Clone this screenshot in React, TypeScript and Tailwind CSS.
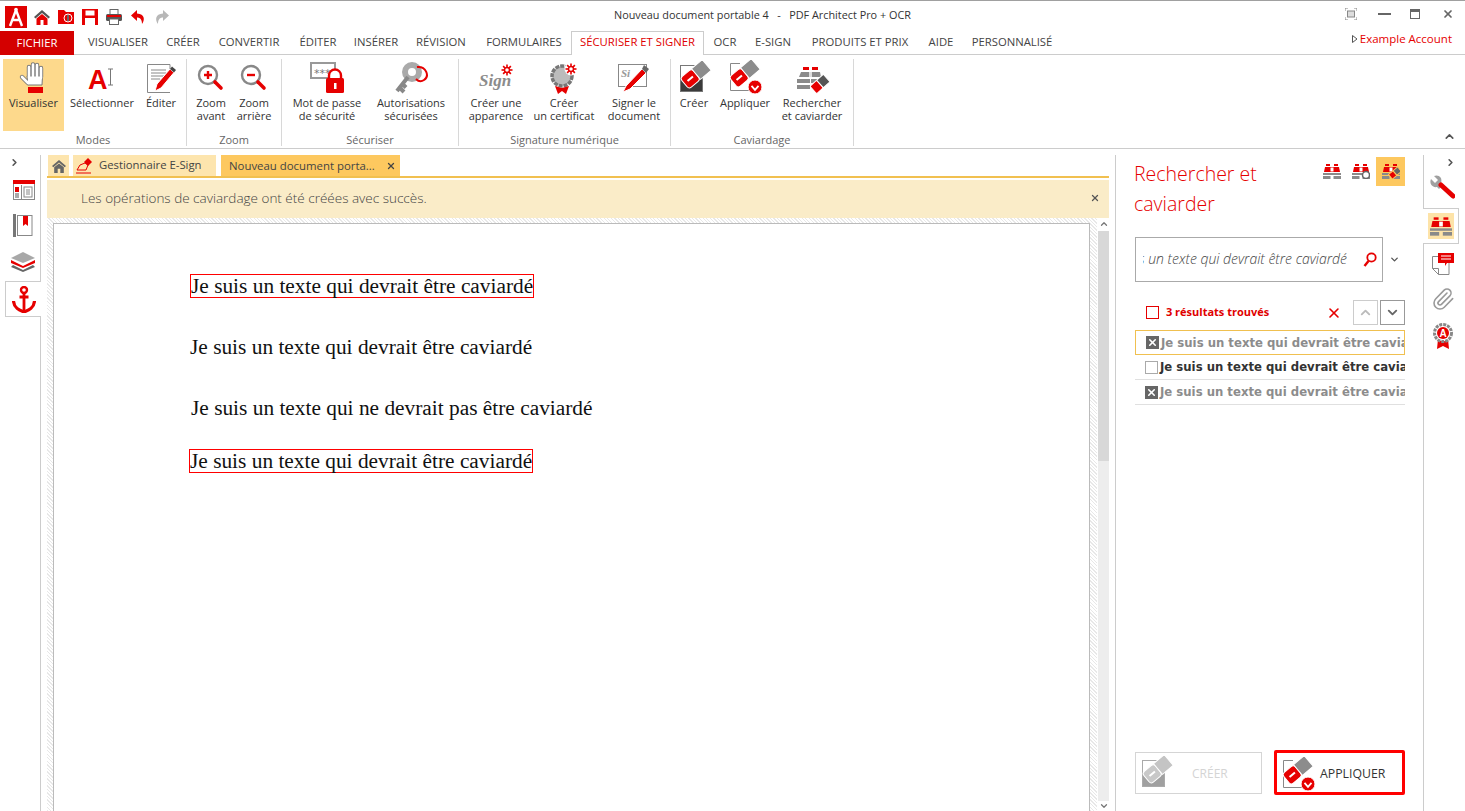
import React from "react";
import { X, ChevronUp, ChevronDown, ChevronRight, Paperclip } from "lucide-react";

const RED = "#e60000";

function Eraser({ cx = 19, cy = 14, red = RED, gray = "#8c8c8c" }: { cx?: number; cy?: number; red?: string; gray?: string }) {
  return (
    <g transform={`rotate(-40 ${cx} ${cy})`}>
      <rect x={cx - 15} y={cy - 7} width="15" height="14" rx="3" fill={red} stroke="#fff" />
      <rect x={cx} y={cy - 7} width="14" height="14" fill={gray} stroke="#fff" />
      <rect x={cx - 11} y={cy - 1} width="7" height="2" fill="#fff" />
    </g>
  );
}
function Check({ x, y, r = 6 }: { x: number; y: number; r?: number }) {
  return (
    <g>
      <circle cx={x} cy={y} r={r} fill={RED} stroke="#fff" />
      <path d={`M${x - r * 0.5} ${y - r * 0.15}L${x} ${y + r * 0.4}L${x + r * 0.5} ${y - r * 0.15}`} fill="none" stroke="#fff" strokeWidth="1.8" />
    </g>
  );
}
function EraserCreate({ muted = false }: { muted?: boolean }) {
  return (
    <svg width="34" height="34" viewBox="0 0 34 34">
      <rect x="3.500" y="4.500" width="22" height="26" fill={muted ? "#a0a0a0" : "#3a3a3a"} stroke={muted ? "#aaa" : "#777"} />
      <rect x="4" y="5" width="21" height="12" fill="#fff" />
      <Eraser cx={19} cy={13} red={muted ? "#c8c8c8" : RED} gray={muted ? "#c4c4c4" : "#8c8c8c"} />
    </svg>
  );
}
function EraserApply() {
  return (
    <svg width="36" height="36" viewBox="0 0 36 36">
      <path d="M24.500 24V30.500H3.500V3.500H13" fill="none" stroke="#888" />
      <Eraser cx={18} cy={13} />
      <Check x={28} y={27} r={7} />
    </svg>
  );
}
function Bino({ w = 18, h = 15, eraser = false, cycle = false }: { w?: number; h?: number; eraser?: boolean; cycle?: boolean }) {
  return (
    <svg width={w} height={h} viewBox="0 0 18 15">
      <rect x="3" y="0" width="4" height="2" fill={RED} />
      <rect x="11" y="0" width="4" height="2" fill={RED} />
      <path d="M2 3H16L17 8H1Z" fill={RED} />
      <rect x="7.500" y="3.500" width="3" height="4" fill="#fff" />
      <rect x="0" y="9" width="18" height="2" fill="#8a8a8a" />
      <rect x="0" y="12" width="7.500" height="3" fill="#8a8a8a" />
      <rect x="10.500" y="12" width="7.500" height="3" fill="#8a8a8a" />
      {eraser && (
        <g transform="rotate(-40 13 9)">
          <rect x="7" y="6" width="6" height="6" fill={RED} stroke="#fdc85f" />
          <rect x="13" y="6" width="6" height="6" fill="#666" stroke="#fdc85f" />
        </g>
      )}
      {cycle && <circle cx="14" cy="11" r="3.500" fill="#fff" stroke="#666" strokeWidth="1.500" />}
    </svg>
  );
}
function Star({ x, y, r = 5 }: { x: number; y: number; r?: number }) {
  return (
    <g stroke={RED} strokeWidth="1.600">
      {[0, 45, 90, 135].map((a) => (
        <line key={a} x1={x - r} y1={y} x2={x + r} y2={y} transform={`rotate(${a} ${x} ${y})`} />
      ))}
      <circle cx={x} cy={y} r={r * 0.45} fill="#fff" strokeWidth="1.400" />
    </g>
  );
}

const Ic = {
  hand: (
    <svg width="34" height="34" viewBox="0 0 34 34">
      <g strokeLinecap="round" fill="none">
        <g stroke="#777" strokeWidth="4.400">
          <path d="M12 16V6M16 15V3.500M20 15V4M24 16V7M11 22L5 16" />
        </g>
        <path d="M10.500 15H25.500L25 24H11Z" fill="#fff" stroke="#777" />
        <g stroke="#fff" strokeWidth="2.600">
          <path d="M12 17V6M16 17V3.500M20 17V4M24 17V7M11 22L5 16" />
        </g>
      </g>
      <rect x="11" y="26" width="15" height="6" fill={RED} />
    </svg>
  ),
  select: (
    <svg width="34" height="34" viewBox="0 0 34 34">
      <text x="3" y="28" fontFamily="Liberation Sans" fontWeight="700" fontSize="27" fill={RED}>A</text>
      <path d="M23 8H28M25.500 8V24M23 24H28" stroke="#777" fill="none" />
    </svg>
  ),
  edit: (
    <svg width="34" height="34" viewBox="0 0 34 34">
      <path d="M3.500 3.500H26V16M3.500 3.500V31.500H26" fill="#fff" stroke="#888" />
      <path d="M7 9H22M7 12H22M7 15H20M7 18H16" stroke="#888" />
      <path d="M11 30L13 23L26 8L30 11.500L17 27Z" fill={RED} stroke="#fff" />
      <path d="M26 8L28 5.500L32 9L30 11.500Z" fill="#444" />
    </svg>
  ),
  zoomIn: (
    <svg width="34" height="34" viewBox="0 0 34 34">
      <circle cx="14" cy="14" r="9" fill="#fff" stroke="#888" strokeWidth="2.400" />
      <path d="M10 14H18M14 10V18" stroke={RED} strokeWidth="2.400" />
      <path d="M21 21L27 27" stroke={RED} strokeWidth="3.600" strokeLinecap="round" />
    </svg>
  ),
  zoomOut: (
    <svg width="34" height="34" viewBox="0 0 34 34">
      <circle cx="14" cy="14" r="9" fill="#fff" stroke="#888" strokeWidth="2.400" />
      <path d="M10 14H18" stroke={RED} strokeWidth="2.400" />
      <path d="M21 21L27 27" stroke={RED} strokeWidth="3.600" strokeLinecap="round" />
    </svg>
  ),
  pwd: (
    <svg width="36" height="34" viewBox="0 0 36 34">
      <rect x="2" y="2" width="24" height="15" fill="#fff" stroke="#999" strokeWidth="2" />
      <text x="5" y="16" fontFamily="DejaVu Sans" fontSize="11" fill="#777">***</text>
      <path d="M20 18V14.500a6 6 0 0 1 12 0V18" fill="#fff" stroke={RED} strokeWidth="2.400" />
      <rect x="17" y="17" width="18" height="15" rx="1.500" fill={RED} />
      <rect x="25" y="22" width="2.500" height="6" fill="#fff" />
    </svg>
  ),
  key: (
    <svg width="36" height="34" viewBox="0 0 36 34">
      <circle cx="19" cy="11" r="7" fill="none" stroke="#aaa" strokeWidth="6" />
      <path d="M15 16L4 30M7 27L11 31M9.500 23L13 26.500" stroke="#888" strokeWidth="4" fill="none" />
      <path d="M24 6C33 5 37 15 31 19C28 21 25 20 23 18" stroke={RED} strokeWidth="2" fill="none" />
    </svg>
  ),
  sign: (
    <svg width="42" height="34" viewBox="0 0 42 34">
      <text x="4" y="25" fontFamily="Liberation Serif" fontStyle="italic" fontWeight="700" fontSize="17" fill="#8c8c8c">Sign</text>
      <Star x={32} y={9} r={5.500} />
    </svg>
  ),
  cert: (
    <svg width="34" height="34" viewBox="0 0 34 34">
      <circle cx="15" cy="15" r="10" fill="#bbb" stroke="#777" strokeWidth="3.500" strokeDasharray="4 1" />
      <path d="M8 25L11 33L15 30L19 33L22 25L15 27Z" fill={RED} />
      <circle cx="24" cy="8" r="6.500" fill="#fff" />
      <Star x={24} y={8} r={5.500} />
    </svg>
  ),
  signer: (
    <svg width="34" height="34" viewBox="0 0 34 34">
      <rect x="1.500" y="3.500" width="28" height="22" fill="#fff" stroke="#888" />
      <text x="4" y="16" fontFamily="Liberation Serif" fontStyle="italic" fontWeight="700" fontSize="11" fill="#999">Si</text>
      <path d="M6 31L9 25L25 8L29 12L13 28Z" fill={RED} stroke="#fff" />
      <path d="M25 8L27 4L32 8L29 12Z" fill="#666" />
    </svg>
  ),
  findErase: (
    <svg width="36" height="34" viewBox="0 0 36 34">
      <rect x="9" y="6" width="6" height="3" fill={RED} />
      <rect x="18" y="6" width="6" height="3" fill={RED} />
      <path d="M7 11H15V16H5ZM18 11H26L27 16H18Z" fill="#8a8a8a" />
      <rect x="15" y="11" width="3" height="5" fill="#ddd" />
      <rect x="3" y="18" width="13" height="4" fill="#8a8a8a" />
      <rect x="17" y="18" width="11" height="4" fill="#8a8a8a" />
      <rect x="3" y="24" width="13" height="4" fill="#8a8a8a" />
      <g transform="rotate(-42 26 23)">
        <rect x="17" y="18" width="9" height="10" rx="1" fill={RED} stroke="#fff" />
        <rect x="26" y="18" width="9" height="10" fill="#555" stroke="#fff" />
      </g>
    </svg>
  ),
};

function Btn({ w, icon, active, children }: { w: string; icon: React.ReactNode; active?: boolean; children: React.ReactNode }) {
  return (
    <div className={`${w} h-[72px] flex flex-col items-center shrink-0 ${active ? "bg-[#fdd98c]" : ""}`}>
      <div className="mt-[2px] h-[34px] flex items-center justify-center">{icon}</div>
      <div className="mt-[1px] text-[11px] leading-[13px] text-center text-[#333] whitespace-nowrap">{children}</div>
    </div>
  );
}
function Group({ w, pl, label, children }: { w: string; pl: string; label: string; children: React.ReactNode }) {
  return (
    <div className={`${w} h-[87px] shrink-0 flex flex-col border-r border-[#d8d8d8]`}>
      <div className={`flex h-[72px] ${pl}`}>{children}</div>
      <div className="h-[15px] mt-[1px] text-[11px] leading-[15px] text-center text-[#666]">{label}</div>
    </div>
  );
}
function Tab({ w, active, children }: { w: string; active?: boolean; children: React.ReactNode }) {
  return (
    <div
      className={`${w} shrink-0 h-[24px] pb-[2px] flex items-center justify-center text-[11.300px] whitespace-nowrap ${
        active ? "bg-white border border-b-0 border-[#ccc] text-[#e00000]" : "text-[#444]"
      }`}
    >
      {children}
    </div>
  );
}
function Row({ checked, active }: { checked: boolean; active?: boolean }) {
  return (
    <div
      className={`h-[25px] w-[270px] flex items-center pl-[10px] overflow-hidden whitespace-nowrap border-b ${
        active ? "border border-[#f0c050]" : "border-[#e0e0e0]"
      }`}
    >
      {checked ? (
        <span className="w-[13px] h-[13px] bg-[#666] flex items-center justify-center shrink-0">
          <X size={11} color="#fff" strokeWidth={3.500} />
        </span>
      ) : (
        <span className="w-[13px] h-[13px] border border-[#aaa] shrink-0" />
      )}
      <span
        className={`ml-[2px] mt-[2px] text-[11.700px] font-bold font-['DejaVu_Sans',sans-serif] ${
          checked ? "text-[#8c8c8c]" : "text-[#333]"
        }`}
      >
        Je suis un texte qui devrait être caviardé
      </span>
    </div>
  );
}

export default function App() {
  const serif = "font-['Liberation_Serif',serif] text-[21.360px] leading-[22px] text-[#111] whitespace-nowrap";
  return (
    <div className="w-[1465px] h-[811px] overflow-hidden flex flex-col bg-white font-['Open_Sans',sans-serif]">
      {/* title bar */}
      <div className="h-[31px] shrink-0 border-t border-[#a0a0a0] flex items-center pl-[5px]">
        <div className="w-[22px] h-[22px] bg-[#e00000] flex items-center justify-center mt-[2px]">
          <svg width="18" height="20" viewBox="0 0 18 20">
            <path d="M9 3L3 19M9 3L15 19M5.500 13H12.500" stroke="#fff" strokeWidth="2.400" fill="none" />
            <circle cx="9" cy="2.500" r="1.800" fill="#fff" />
          </svg>
        </div>
        <div className="flex items-center gap-[8px] ml-[7px] mt-[1px]">
          <svg width="16" height="16" viewBox="0 0 16 16">
            <path d="M0 8L8 1L16 8L14.500 9.500L8 4L1.500 9.500Z" fill="#555" />
            <path d="M2.500 9.500L8 5L13.500 9.500V16H9.500V11H6.500V16H2.500Z" fill={RED} />
          </svg>
          <svg width="16" height="16" viewBox="0 0 16 16">
            <path d="M0 1H6L8 3H16V15H0Z" fill={RED} />
            <circle cx="10" cy="9" r="4" fill="none" stroke="#fff" />
            <path d="M10 6V12" stroke="#666" strokeWidth="2" />
          </svg>
          <svg width="16" height="16" viewBox="0 0 16 16">
            <path d="M0 0H16V16H0Z" fill={RED} />
            <rect x="3.500" y="1.500" width="9" height="5" fill="#fff" />
            <rect x="3" y="9" width="10" height="7" fill="#fff" />
          </svg>
          <svg width="16" height="16" viewBox="0 0 16 16">
            <rect x="4" y="0.500" width="8" height="5" fill="#fff" stroke="#666" />
            <rect x="0" y="5" width="16" height="7" rx="1.500" fill="#555" />
            <rect x="1" y="6" width="14" height="2" fill={RED} />
            <rect x="3.500" y="10" width="9" height="5.500" fill="#fff" stroke="#666" />
          </svg>
          <svg width="16" height="16" viewBox="0 0 16 16">
            <path d="M7 1L1 6.500L7 12V8.500C10 8.500 12 10.500 12 15C15 11 15 5 7 4.500Z" fill={RED} />
          </svg>
          <svg width="16" height="16" viewBox="0 0 16 16">
            <path d="M9 1L15 6.500L9 12V8.500C6 8.500 4 10.500 4 15C1 11 1 5 9 4.500Z" fill="#b8b8b8" />
          </svg>
        </div>
        <div className="ml-[444px] mt-[-2px] text-[10.850px] text-[#333] whitespace-pre w-[300px]">Nouveau document portable 4   -   PDF Architect Pro + OCR</div>
        <div className="flex items-center ml-[431px] mt-[-5px]">
          <svg width="12" height="12" viewBox="0 0 12 12" className="shrink-0">
            <path d="M0 3V0H3M9 0H12V3M12 9V12H9M3 12H0V9" fill="none" stroke="#888" />
            <rect x="2.500" y="3" width="7" height="6" fill="#ddd" stroke="#888" />
          </svg>
          <div className="w-[13px] h-[2px] bg-[#666] ml-[21px]" />
          <div className="w-[10px] h-[10px] border border-[#666] border-t-[3px] ml-[19px]" />
          <X size={12} color="#666" strokeWidth={3.500} className="ml-[22px]" />
        </div>
      </div>
      {/* tabs */}
      <div className="h-[24px] shrink-0 flex border-b border-[#ccc] relative">
        <div className="w-[74px] h-[24px] bg-[#d40000] text-white text-[11.300px] flex items-center justify-center">FICHIER</div>
        <Tab w="w-[74px] ml-[7px]">VISUALISER</Tab>
        <Tab w="w-[56px]">CRÉER</Tab>
        <Tab w="w-[76px]">CONVERTIR</Tab>
        <Tab w="w-[62px]">ÉDITER</Tab>
        <Tab w="w-[54px]">INSÉRER</Tab>
        <Tab w="w-[76px]">RÉVISION</Tab>
        <Tab w="w-[90px]">FORMULAIRES</Tab>
        <Tab w="w-[133px] ml-[2px]" active>SÉCURISER ET SIGNER</Tab>
        <Tab w="w-[42px]">OCR</Tab>
        <Tab w="w-[54px]">E-SIGN</Tab>
        <Tab w="w-[100px] ml-[10px]">PRODUITS ET PRIX</Tab>
        <Tab w="w-[34px] ml-[14px]">AIDE</Tab>
        <Tab w="w-[108px]">PERSONNALISÉ</Tab>
        <div className="flex-1 flex items-start justify-end pr-[13px] pt-[0px] text-[11.500px] leading-[16px] text-[#e60000]">
          <svg width="6" height="8" viewBox="0 0 6 8" className="mr-[2px] mt-[4px]"><path d="M0.500 0.500L5 4L0.500 7.500Z" fill="#fff" stroke="#555" /></svg>
          Example Account
        </div>
      </div>
      {/* ribbon */}
      <div className="h-[94px] shrink-0 border-b border-[#ccc] pt-[4px] flex relative">
        <Group w="w-[187px]" pl="pl-[3px]" label="Modes">
          <Btn w="w-[61px]" active icon={Ic.hand}>Visualiser</Btn>
          <Btn w="w-[76px]" icon={Ic.select}>Sélectionner</Btn>
          <Btn w="w-[42px]" icon={Ic.edit}>Éditer</Btn>
        </Group>
        <Group w="w-[95px]" pl="pl-[3px]" label="Zoom">
          <Btn w="w-[42px]" icon={Ic.zoomIn}>Zoom<br />avant</Btn>
          <Btn w="w-[44px]" icon={Ic.zoomOut}>Zoom<br />arrière</Btn>
        </Group>
        <Group w="w-[177px]" pl="pl-[3px]" label="Sécuriser">
          <Btn w="w-[84px]" icon={Ic.pwd}>Mot de passe<br />de sécurité</Btn>
          <Btn w="w-[84px]" icon={Ic.key}>Autorisations<br />sécurisées</Btn>
        </Group>
        <Group w="w-[212px]" pl="pl-[7px]" label="Signature numérique">
          <Btn w="w-[60px]" icon={Ic.sign}>Créer une<br />apparence</Btn>
          <Btn w="w-[76px]" icon={Ic.cert}>Créer<br />un certificat</Btn>
          <Btn w="w-[64px]" icon={Ic.signer}>Signer le<br />document</Btn>
        </Group>
        <Group w="w-[183px]" pl="pl-[3px]" label="Caviardage">
          <Btn w="w-[40px]" icon={<EraserCreate />}>Créer</Btn>
          <Btn w="w-[62px]" icon={<EraserApply />}>Appliquer</Btn>
          <Btn w="w-[72px]" icon={Ic.findErase}>Rechercher<br />et caviarder</Btn>
        </Group>
        <ChevronUp size={13} color="#555" strokeWidth={3} className="absolute right-[9px] top-[75px]" />
      </div>
      {/* main */}
      <div className="flex-1 min-h-0 flex pt-[6px]">
        {/* left rail */}
        <div className="w-[41px] shrink-0 flex flex-col">
          <div className="h-[126px] border-r border-[#ccc] flex flex-col items-center">
            <ChevronRight size={11} color="#555" strokeWidth={3.500} className="mt-[2px] mr-[11px]" />
            <svg width="22" height="20" viewBox="0 0 22 20" className="mt-[12px] mr-[-7px]">
              <rect x="0.500" y="3" width="21" height="16.500" fill="#fff" stroke="#888" />
              <rect x="0" y="0" width="22" height="4" fill={RED} />
              <rect x="2" y="7" width="4" height="5" fill={RED} />
              <rect x="2" y="13" width="4" height="5" fill="#aaa" />
              <path d="M8.500 5V19" stroke="#888" />
              <rect x="11" y="7" width="8" height="10" fill="#fff" stroke="#888" />
              <path d="M13 10H17M13 12H17M13 14H17" stroke="#888" />
            </svg>
            <svg width="20" height="23" viewBox="0 0 20 23" className="mt-[14px] mr-[-6px]">
              <rect x="0" y="0" width="3" height="23" fill="#777" />
              <rect x="4.500" y="1.500" width="14.500" height="20" fill="#fff" stroke="#888" />
              <path d="M10 2H15V12L12.500 10L10 12Z" fill={RED} />
            </svg>
            <svg width="24" height="20" viewBox="0 0 24 20" className="mt-[15px] mr-[-6px]">
              <path d="M12 0L24 6L12 11L0 6Z" fill="#a8a8a8" />
              <path d="M0 8L12 14L24 8V11L12 16L0 11Z" fill={RED} />
              <path d="M2 13L12 18L22 13L24 15L12 20L0 15Z" fill="#666" />
            </svg>
          </div>
          <div className="h-[36px] ml-[5px] border border-r-0 border-[#ccc] flex items-center justify-center">
            <svg width="24" height="27" viewBox="0 0 24 27">
              <circle cx="12" cy="4" r="3" fill="none" stroke={RED} strokeWidth="2.400" />
              <path d="M12 7V25M7.500 11H16.500" stroke={RED} strokeWidth="2.800" fill="none" />
              <path d="M1.500 15C2 22 7 24 12 26C17 24 22 22 22.500 15" fill="none" stroke={RED} strokeWidth="3.200" />
            </svg>
          </div>
          <div className="flex-1 border-r border-[#ccc]" />
        </div>
        {/* center */}
        <div className="w-[1062px] ml-[6px] shrink-0 flex flex-col min-h-0">
          <div className="h-[21px] shrink-0 flex">
            <div className="w-[21px] ml-[1px] bg-[#fde5ae] flex items-center justify-center">
              <svg width="14" height="14" viewBox="0 0 16 16">
                <path d="M0 8L8 1L16 8L14.500 9.500L8 4L1.500 9.500Z" fill="#666" />
                <path d="M2.500 9.500L8 5L13.500 9.500V16H9.500V11H6.500V16H2.500Z" fill="#666" />
              </svg>
            </div>
            <div className="w-[143px] ml-[4px] bg-[#fde5ae] flex items-center pl-[3px] text-[11.300px] text-[#444]">
              <svg width="17" height="17" viewBox="0 0 17 17">
                <path d="M1 13L4 8L9 6L12 8L10 13Z" fill="none" stroke={RED} />
                <path d="M8 5L12 1L16 5L12 9Z" fill={RED} />
                <path d="M0 16H15" stroke={RED} />
              </svg>
              <span className="ml-[6px]">Gestionnaire E-Sign</span>
            </div>
            <div className="w-[179px] ml-[5px] bg-[#fdc85f] flex items-center pl-[8px] text-[11.400px] text-[#444]">
              <span className="w-[157px] whitespace-nowrap">Nouveau document porta...</span>
              <X size={10} color="#444" strokeWidth={3} />
            </div>
          </div>
          <div className="h-[2px] shrink-0 bg-[#f1c050]" />
          <div className="h-[38px] shrink-0 mt-[2px] pb-[2px] bg-[#faecc8] flex items-center justify-between pl-[34px] pr-[9px] text-[13.500px] font-light text-[#444]">
            <span>Les opérations de caviardage ont été créées avec succès.</span>
            <X size={10} color="#555" strokeWidth={3} />
          </div>
          <div className="flex-1 min-h-0 flex">
            <div className="flex-1 pt-[5px] pl-[6px] pr-[7px] bg-[repeating-linear-gradient(45deg,#e8e8e8_0,#e8e8e8_1px,#ffffff_1px,#ffffff_2.500px)]">
              <div className="h-[700px] bg-white border border-[#bbb] flex flex-col items-start">
                <div className={`ml-[136px] mt-[50px] h-[24px] border border-[#ff0000] ${serif}`}>Je suis un texte qui devrait être caviardé</div>
                <div className={`ml-[136px] mt-[37px] h-[24px] leading-[24px] ${serif}`}>Je suis un texte qui devrait être caviardé</div>
                <div className={`ml-[137px] mt-[37px] h-[24px] leading-[24px] ${serif}`}>Je suis un texte qui ne devrait pas être caviardé</div>
                <div className={`ml-[135px] mt-[29px] h-[24px] border border-[#ff0000] ${serif}`}>Je suis un texte qui devrait être caviardé</div>
              </div>
            </div>
            <div className="w-[12px] shrink-0 flex flex-col items-stretch pl-[1px]">
              <div className="h-[13px] flex items-center justify-center"><ChevronUp size={10} color="#777" strokeWidth={3} /></div>
              <div className="h-[230px] bg-[#d8d8d8]" />
              <div className="h-[341px] bg-[#ededed]" />
              <div className="flex-1 flex items-center justify-center"><ChevronDown size={10} color="#777" strokeWidth={3} /></div>
            </div>
          </div>
        </div>
        {/* panel */}
        <div className="w-[308px] ml-[6px] shrink-0 border-l border-[#ccc] pl-[18px] pr-[18px] flex flex-col pb-[16px]">
          <div className="h-[82px] flex justify-between">
            <div className="w-[150px] text-[19.500px] leading-[30px] font-light text-[#e60000] pt-[4px]">Rechercher et caviarder</div>
            <div className="flex mt-[2px] h-[29px]">
              <div className="w-[29px] h-[29px] flex items-center justify-center"><Bino /></div>
              <div className="w-[30px] h-[29px] flex items-center justify-center"><Bino cycle /></div>
              <div className="w-[29px] h-[29px] bg-[#fdc85f] flex items-center justify-center"><Bino eraser /></div>
            </div>
          </div>
          <div className="flex items-center ml-[1px]">
            <div className="w-[248px] h-[45px] border border-[#aaa] flex items-center pl-[7px]">
              <div className="w-[204px] shrink-0 mb-[2px] overflow-hidden flex justify-end whitespace-nowrap text-[14px] font-light italic text-[#444]">Je suis un texte qui devrait être caviardé</div>
              <svg width="14" height="16" viewBox="0 0 14 16" className="ml-[16px] shrink-0">
                <circle cx="8.500" cy="5.500" r="4.200" fill="none" stroke={RED} strokeWidth="1.800" />
                <path d="M5.500 9L1.500 14" stroke={RED} strokeWidth="2.400" />
              </svg>
            </div>
            <ChevronDown size={11} color="#555" strokeWidth={3} className="ml-[6px]" />
          </div>
          <div className="flex items-center h-[25px] mt-[18px] ml-[1px]">
            <span className="w-[13px] h-[13px] border border-[#e60000] ml-[11px]" />
            <span className="ml-[7px] text-[11px] font-bold text-[#e00000] w-[161px]">3 résultats trouvés</span>
            <X size={16} color="#e60000" strokeWidth={2.500} />
            <div className="w-[25px] h-[25px] ml-[11px] border border-[#ccc] flex items-center justify-center"><ChevronUp size={15} color="#bbb" strokeWidth={3} /></div>
            <div className="w-[25px] h-[25px] ml-[2px] border border-[#999] flex items-center justify-center"><ChevronDown size={15} color="#666" strokeWidth={3} /></div>
          </div>
          <div className="mt-[5px] ml-[1px] flex flex-col">
            <Row checked active />
            <Row checked={false} />
            <Row checked />
          </div>
          <div className="flex-1" />
          <div className="flex items-center ml-[1px]">
            <div className="w-[127px] h-[42px] border border-[#d5d5d5] flex items-center pl-[3px]">
              <EraserCreate muted />
              <span className="ml-[19px] mt-[2px] text-[12px] text-[#d4d4d4]">CRÉER</span>
            </div>
            <div className="w-[131px] h-[45px] ml-[12px] border-[3px] border-[#ff0000] rounded-[2px] flex items-center pl-[3px]">
              <div className="mt-[4px] shrink-0"><EraserApply /></div>
              <span className="ml-[4px] mt-[3px] text-[12.300px] text-[#333]">APPLIQUER</span>
            </div>
          </div>
        </div>
        {/* right rail */}
        <div className="flex-1 flex flex-col">
          <div className="h-[53px] border-l border-[#ccc] flex flex-col items-start">
            <ChevronRight size={11} color="#555" strokeWidth={3.500} className="mt-[2px] ml-[21px]" />
            <svg width="26" height="26" viewBox="0 0 26 26" className="ml-[5px] mt-[6px]">
              <path d="M2 5L6 9L9 6L5 2C9 0 14 3 12 9L14 11L10 15L8 13C3 14 0 9 2 5Z" fill="#a0a0a0" />
              <path d="M12 11L24 22" stroke={RED} strokeWidth="5" strokeLinecap="round" />
            </svg>
          </div>
          <div className="h-[36px] w-[36px] border border-l-0 border-[#ccc] flex items-center justify-center">
            <div className="w-[26px] h-[26px] bg-[#fde3a8] flex items-center justify-center"><Bino w={22} h={19} /></div>
          </div>
          <div className="flex-1 border-l border-[#ccc] flex flex-col items-start pl-[7px]">
            <svg width="24" height="23" viewBox="0 0 24 23" className="mt-[8px]">
              <path d="M1.500 4.500H18V22.500H7.500L1.500 16.500Z" fill="#fff" stroke="#888" />
              <path d="M1.500 16.500H7.500V22.500" fill="none" stroke="#888" />
              <path d="M7 1H23V11H16L14 14V11H7Z" fill={RED} />
              <path d="M10 4H20M10 7H20" stroke="#fff" />
            </svg>
            <Paperclip size={24} color="#999" strokeWidth={1.600} className="mt-[12px]" />
            <svg width="20" height="26" viewBox="0 0 20 26" className="mt-[12px] ml-[2px]">
              <path d="M5 16L4 26L10 23L16 26L15 16Z" fill={RED} />
              <circle cx="10" cy="10" r="8.500" fill="#fff" stroke="#888" strokeWidth="3" strokeDasharray="3 1" />
              <circle cx="10" cy="10" r="6" fill={RED} />
              <text x="6.500" y="13.500" fontFamily="Liberation Sans" fontWeight="700" fontSize="10" fill="#fff">A</text>
            </svg>
          </div>
        </div>
      </div>
    </div>
  );
}
